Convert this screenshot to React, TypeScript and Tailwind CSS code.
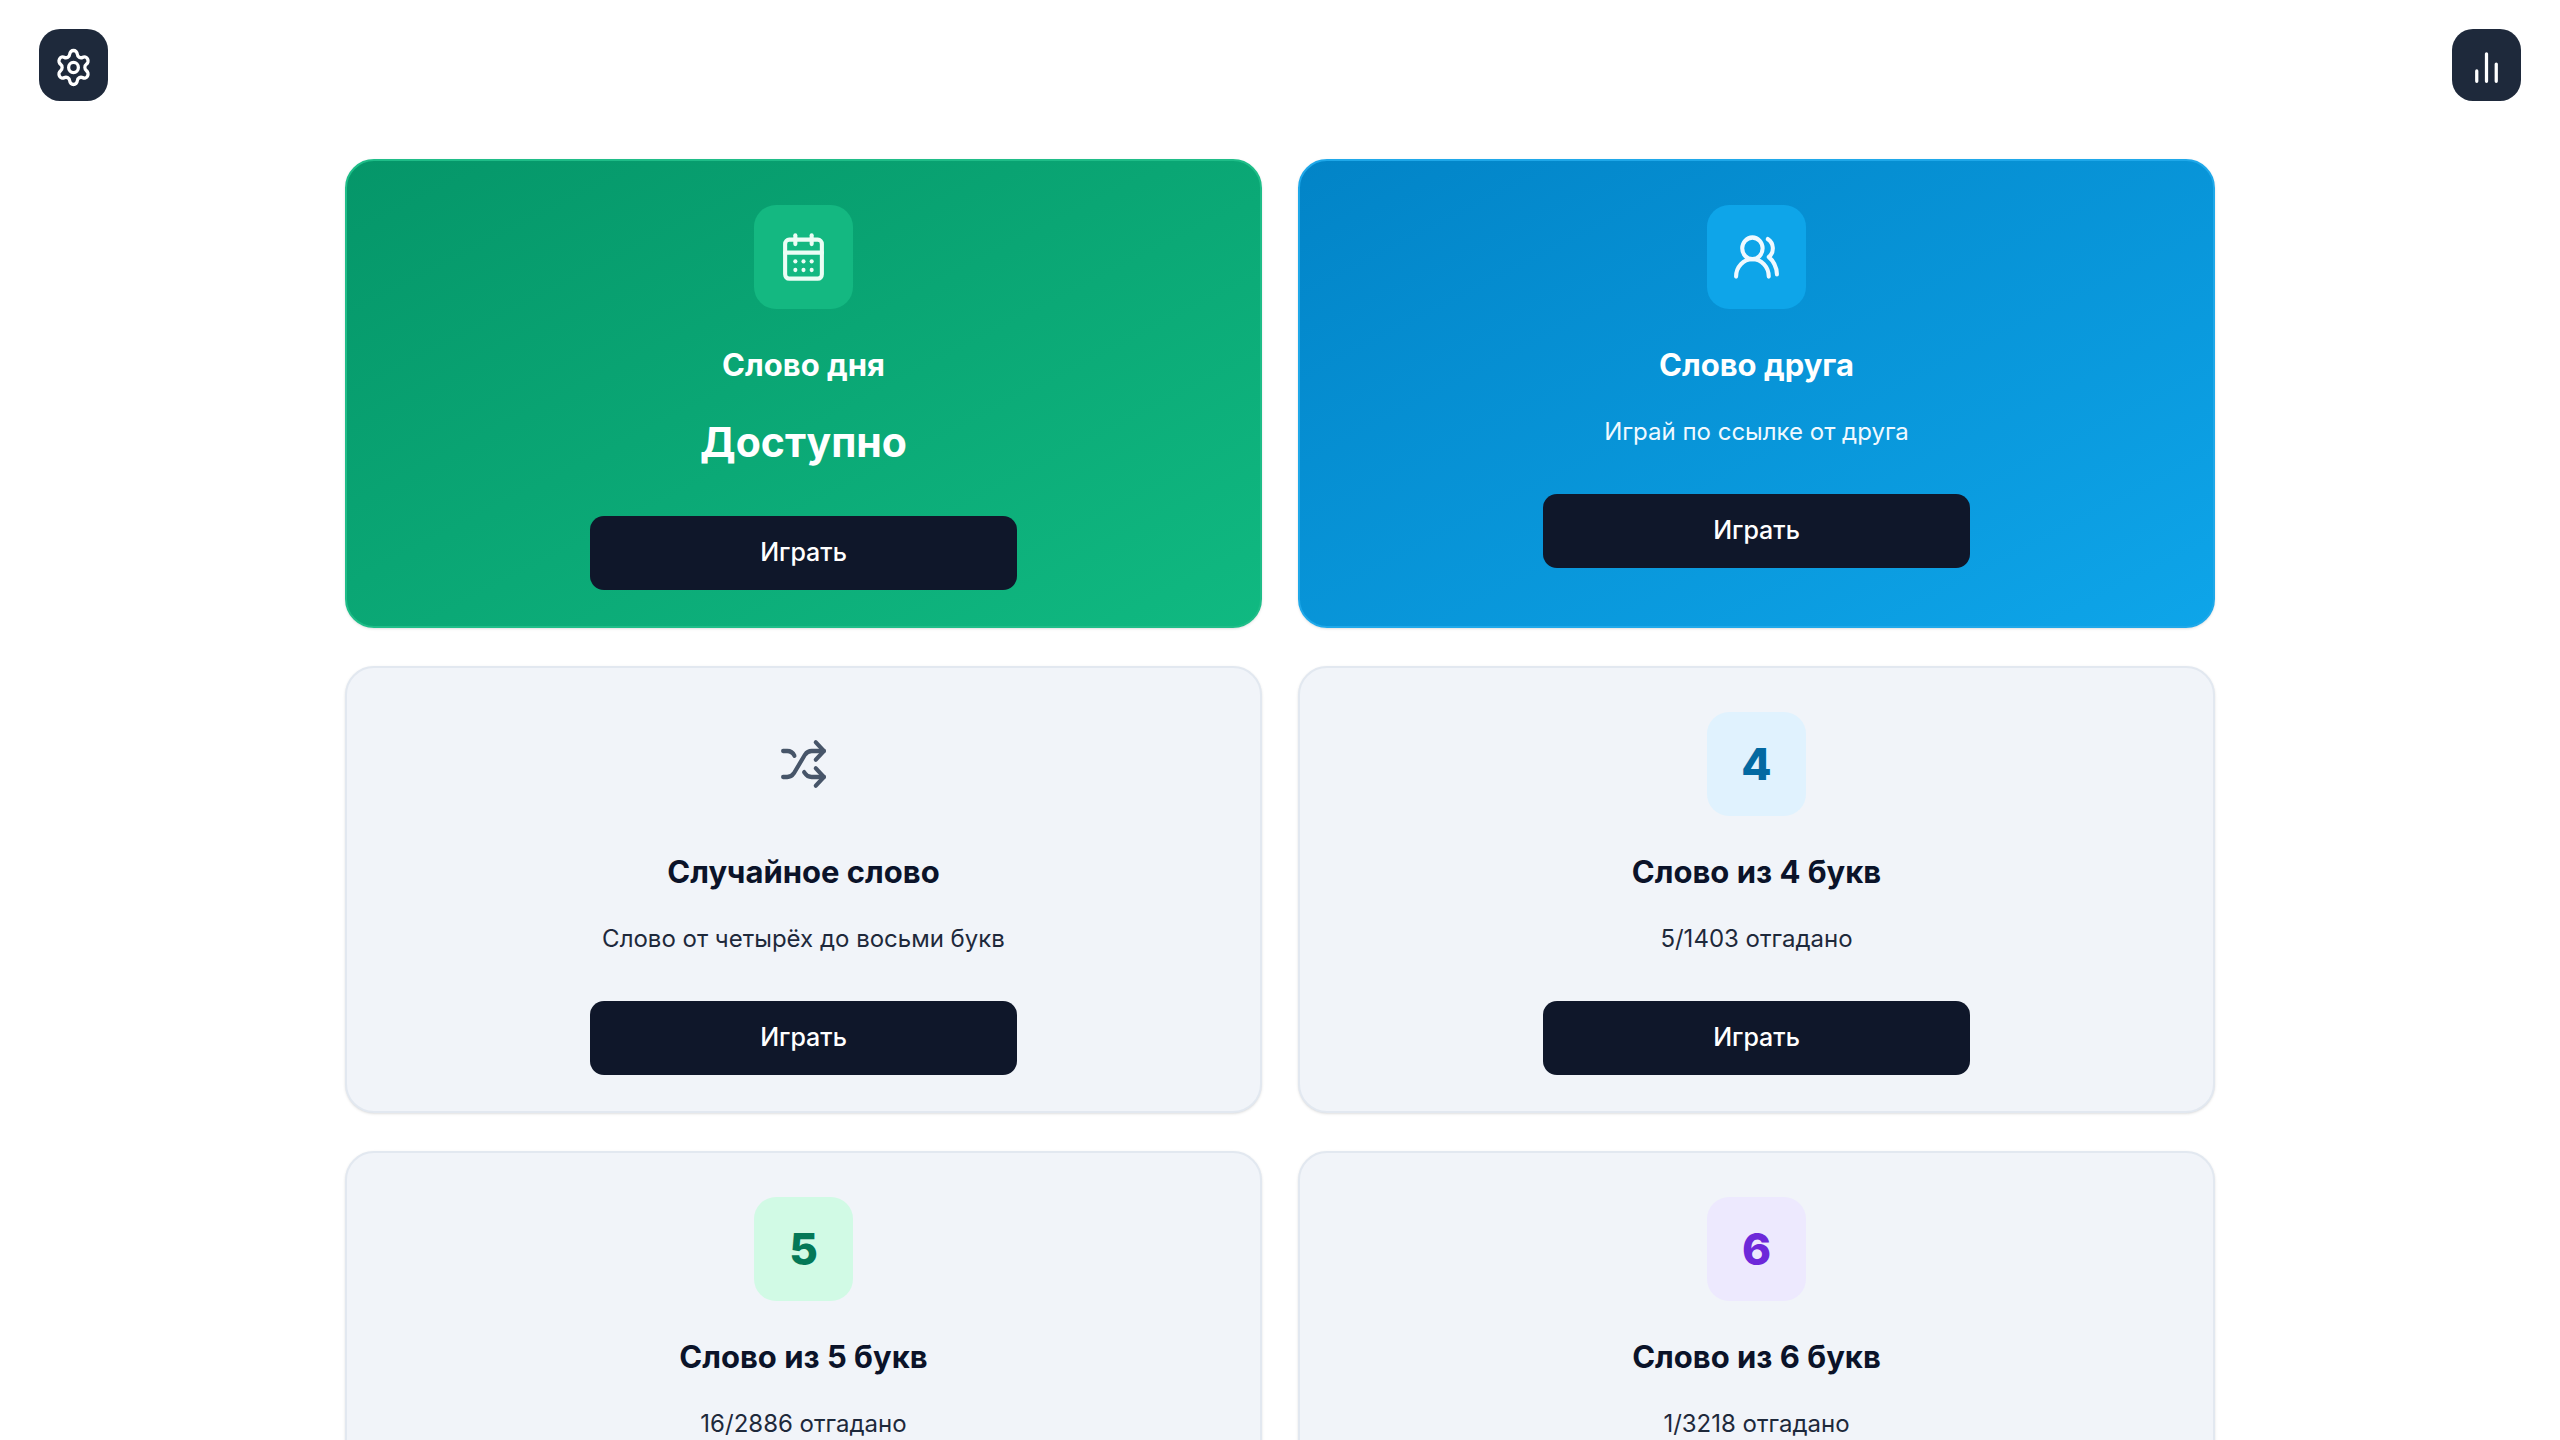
import { CalendarDays, Settings, Shuffle, UsersRound } from "lucide-react";
import type { ReactNode } from "react";

interface Mode {
  id: string;
  title: string;
  status?: string;
  text?: string;
  icon: ReactNode;
  card: string;
  badge: string;
}

const plainCard = "bg-[#f1f4f9] border-[#e2e8f0] text-[#0b1329]";
const iconSize = "w-[49px] h-[52px]";

const modes: Mode[] = [
  {
    id: "daily",
    title: "Слово дня",
    status: "Доступно",
    icon: <CalendarDays preserveAspectRatio="none" className={iconSize} />,
    card: "bg-linear-to-br/srgb from-[#059669] to-[#10b981] border-[#1fbd88] text-white",
    badge: "bg-[#14b881] text-[#ecfdf5]",
  },
  {
    id: "friend",
    title: "Слово друга",
    text: "Играй по ссылке от друга",
    icon: <UsersRound preserveAspectRatio="none" className={iconSize} />,
    card: "bg-linear-to-br/srgb from-[#0284c7] to-[#0ea5e9] border-[#1fa8e9] text-white",
    badge: "bg-[#0ea5e9] text-[#f0f9ff]",
  },
  {
    id: "random",
    title: "Случайное слово",
    text: "Слово от четырёх до восьми букв",
    icon: <Shuffle preserveAspectRatio="none" className={iconSize} />,
    card: plainCard,
    badge: "text-[#475569]",
  },
  { id: "four", title: "Слово из 4 букв", text: "5/1403 отгадано", icon: "4", card: plainCard, badge: "bg-[#e0f2fe] text-[#0369a1]" },
  { id: "five", title: "Слово из 5 букв", text: "16/2886 отгадано", icon: "5", card: plainCard, badge: "bg-[#d1fae5] text-[#047857]" },
  { id: "six", title: "Слово из 6 букв", text: "1/3218 отгадано", icon: "6", card: plainCard, badge: "bg-[#ede9fe] text-[#6d28d9]" },
];

function BarsIcon() {
  return (
    <svg viewBox="0 0 24 24" preserveAspectRatio="none" fill="none" stroke="currentColor" strokeWidth="2" strokeLinecap="round" className="w-[39px] h-[41px]">
      <path d="M6 20v-6M12 20V4M18 20V10" />
    </svg>
  );
}

function HeaderButton({ label, children }: { label: string; children: ReactNode }) {
  return (
    <button aria-label={label} className="flex items-center justify-center w-[69px] h-[72px] pt-[5px] rounded-[21px] bg-[#1e293b] text-white hover:bg-slate-700">
      {children}
    </button>
  );
}

function ModeCard({ mode }: { mode: Mode }) {
  const { title, status, text, icon, card, badge } = mode;
  const muted = card === plainCard ? "text-[#1e293b]" : "text-[#f0f9ff]";
  return (
    <section className={`flex flex-col items-center rounded-[29px] border-2 px-9 pt-11 pb-9 text-center shadow-sm ${card}`}>
      <div className={`flex items-center justify-center w-[99px] h-[104px] rounded-[22px] text-[44px] font-extrabold ${badge}`}>{icon}</div>
      <h2 className="mt-[30px] text-[31px] leading-[52px] font-bold">{title}</h2>
      {status && <p className="mt-[22px] text-[41px] leading-[59px] font-bold">{status}</p>}
      {text && <p className={`mt-[22px] text-[24px] leading-[37px] ${muted}`}>{text}</p>}
      <button className="mt-11 w-full max-w-[427px] h-[74px] rounded-[14px] bg-[#0f172a] text-[25px] font-medium text-white hover:bg-slate-800">
        Играть
      </button>
    </section>
  );
}

export default function App() {
  return (
    <div className="h-screen overflow-hidden bg-white font-['Inter',sans-serif]">
      <header className="flex justify-between px-[39px] pt-[29px]">
        <HeaderButton label="Настройки">
          <Settings preserveAspectRatio="none" className="w-[39px] h-[41px]" />
        </HeaderButton>
        <HeaderButton label="Статистика">
          <BarsIcon />
        </HeaderButton>
      </header>
      <main className="mx-auto mt-[58px] grid w-full max-w-[1870px] grid-cols-2 gap-x-9 gap-y-[38px]">
        {modes.map((m) => (
          <ModeCard key={m.id} mode={m} />
        ))}
      </main>
    </div>
  );
}
